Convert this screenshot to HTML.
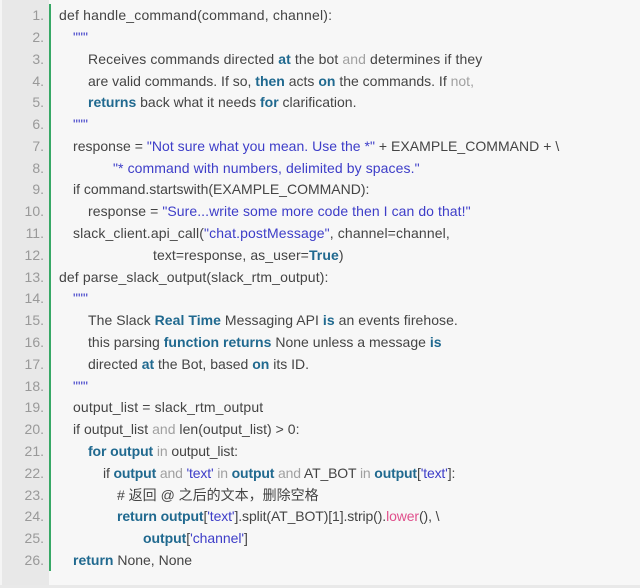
<!DOCTYPE html>
<html><head><meta charset="utf-8">
<style>
html,body{margin:0;padding:0;background:#f0f0f0}
#p{position:relative;width:640px;height:588px;overflow:hidden;background:#f7f7f7;font:14px/22px "Liberation Sans","Noto Sans CJK SC",sans-serif;color:#444}
#g{position:absolute;left:2px;top:0;width:47px;height:585px;background:#e8e8e8}
#l{position:absolute;left:0;top:0;width:2px;height:588px;background:#f5f5f5}
#b{position:absolute;left:0;top:585px;width:640px;height:3px;background:#e9e9e9}
#s{position:absolute;left:49px;top:4px;width:2px;height:567px;background:#37a866}
.n{position:absolute;right:596px;color:#999;white-space:pre}
.c{position:absolute;white-space:pre}
b{color:#20698f;font-weight:bold}
i{font-style:normal;color:#3d3dc8}
u{text-decoration:none;color:#a0a0a0}
em{font-style:normal;color:#e0508c}
</style></head><body><div id="p">
<div id="g"></div><div id="l"></div><div id="b"></div><div id="s"></div>
<div class="n" style="top:4px">1.</div>
<div class="n" style="top:26px">2.</div>
<div class="n" style="top:48px">3.</div>
<div class="n" style="top:70px">4.</div>
<div class="n" style="top:91px">5.</div>
<div class="n" style="top:113px">6.</div>
<div class="n" style="top:135px">7.</div>
<div class="n" style="top:157px">8.</div>
<div class="n" style="top:178px">9.</div>
<div class="n" style="top:200px">10.</div>
<div class="n" style="top:222px">11.</div>
<div class="n" style="top:244px">12.</div>
<div class="n" style="top:266px">13.</div>
<div class="n" style="top:287px">14.</div>
<div class="n" style="top:309px">15.</div>
<div class="n" style="top:331px">16.</div>
<div class="n" style="top:353px">17.</div>
<div class="n" style="top:375px">18.</div>
<div class="n" style="top:396px">19.</div>
<div class="n" style="top:418px">20.</div>
<div class="n" style="top:440px">21.</div>
<div class="n" style="top:462px">22.</div>
<div class="n" style="top:484px">23.</div>
<div class="n" style="top:505px">24.</div>
<div class="n" style="top:527px">25.</div>
<div class="n" style="top:549px">26.</div>

<div class="c" style="left:59px;top:4px;letter-spacing:.19px">def handle_command(command, channel):</div>
<div class="c" style="left:73px;top:26px"><i>"""</i></div>
<div class="c" style="left:88px;top:48px;letter-spacing:.1px">Receives commands directed <b>at</b> the bot <u>and</u> determines if they</div>
<div class="c" style="left:88px;top:70px">are valid commands. If so, <b>then</b> acts <b>on</b> the commands. If <u>not,</u></div>
<div class="c" style="left:88px;top:91px"><b>returns</b> back what it needs <b>for</b> clarification.</div>
<div class="c" style="left:73px;top:113px"><i>"""</i></div>
<div class="c" style="left:73px;top:135px;letter-spacing:.03px">response = <i>"Not sure what you mean. Use the *"</i> + EXAMPLE_COMMAND + \</div>
<div class="c" style="left:113px;top:157px;letter-spacing:.09px"><i>"* command with numbers, delimited by spaces."</i></div>
<div class="c" style="left:73px;top:178px">if command.startswith(EXAMPLE_COMMAND):</div>
<div class="c" style="left:88px;top:200px;letter-spacing:.07px">response = <i>"Sure...write some more code then I can do that!"</i></div>
<div class="c" style="left:73px;top:222px;letter-spacing:.12px">slack_client.api_call(<i>"chat.postMessage"</i>, channel=channel,</div>
<div class="c" style="left:153px;top:244px;letter-spacing:.08px">text=response, as_user=<b>True</b>)</div>
<div class="c" style="left:59px;top:266px;letter-spacing:.12px">def parse_slack_output(slack_rtm_output):</div>
<div class="c" style="left:73px;top:287px"><i>"""</i></div>
<div class="c" style="left:88px;top:309px;letter-spacing:.05px">The Slack <b>Real Time</b> Messaging API <b>is</b> an events firehose.</div>
<div class="c" style="left:88px;top:331px;letter-spacing:.02px">this parsing <b>function returns</b> None unless a message <b>is</b></div>
<div class="c" style="left:88px;top:353px">directed <b>at</b> the Bot, based <b>on</b> its ID.</div>
<div class="c" style="left:73px;top:375px"><i>"""</i></div>
<div class="c" style="left:73px;top:396px;letter-spacing:.13px">output_list = slack_rtm_output</div>
<div class="c" style="left:73px;top:418px;letter-spacing:.03px">if output_list <u>and</u> len(output_list) &gt; 0:</div>
<div class="c" style="left:88px;top:440px;letter-spacing:-.1px"><b>for output</b> <u>in</u> output_list:</div>
<div class="c" style="left:103px;top:462px;letter-spacing:-.15px">if <b>output</b> <u>and</u> <i>'text'</i> <u>in</u> <b>output</b> <u>and</u> AT_BOT <u>in</u> <b>output</b>[<i>'text'</i>]:</div>
<div class="c" style="left:117px;top:484px"># 返回 @ 之后的文本，删除空格</div>
<div class="c" style="left:117px;top:505px;letter-spacing:-.11px"><b>return output</b>[<i>'text'</i>].split(AT_BOT)[1].strip().<em>lower</em>(), \</div>
<div class="c" style="left:143px;top:527px;letter-spacing:-.05px"><b>output</b>[<i>'channel'</i>]</div>
<div class="c" style="left:73px;top:549px"><b>return</b> None, None</div>
</div></body></html>
